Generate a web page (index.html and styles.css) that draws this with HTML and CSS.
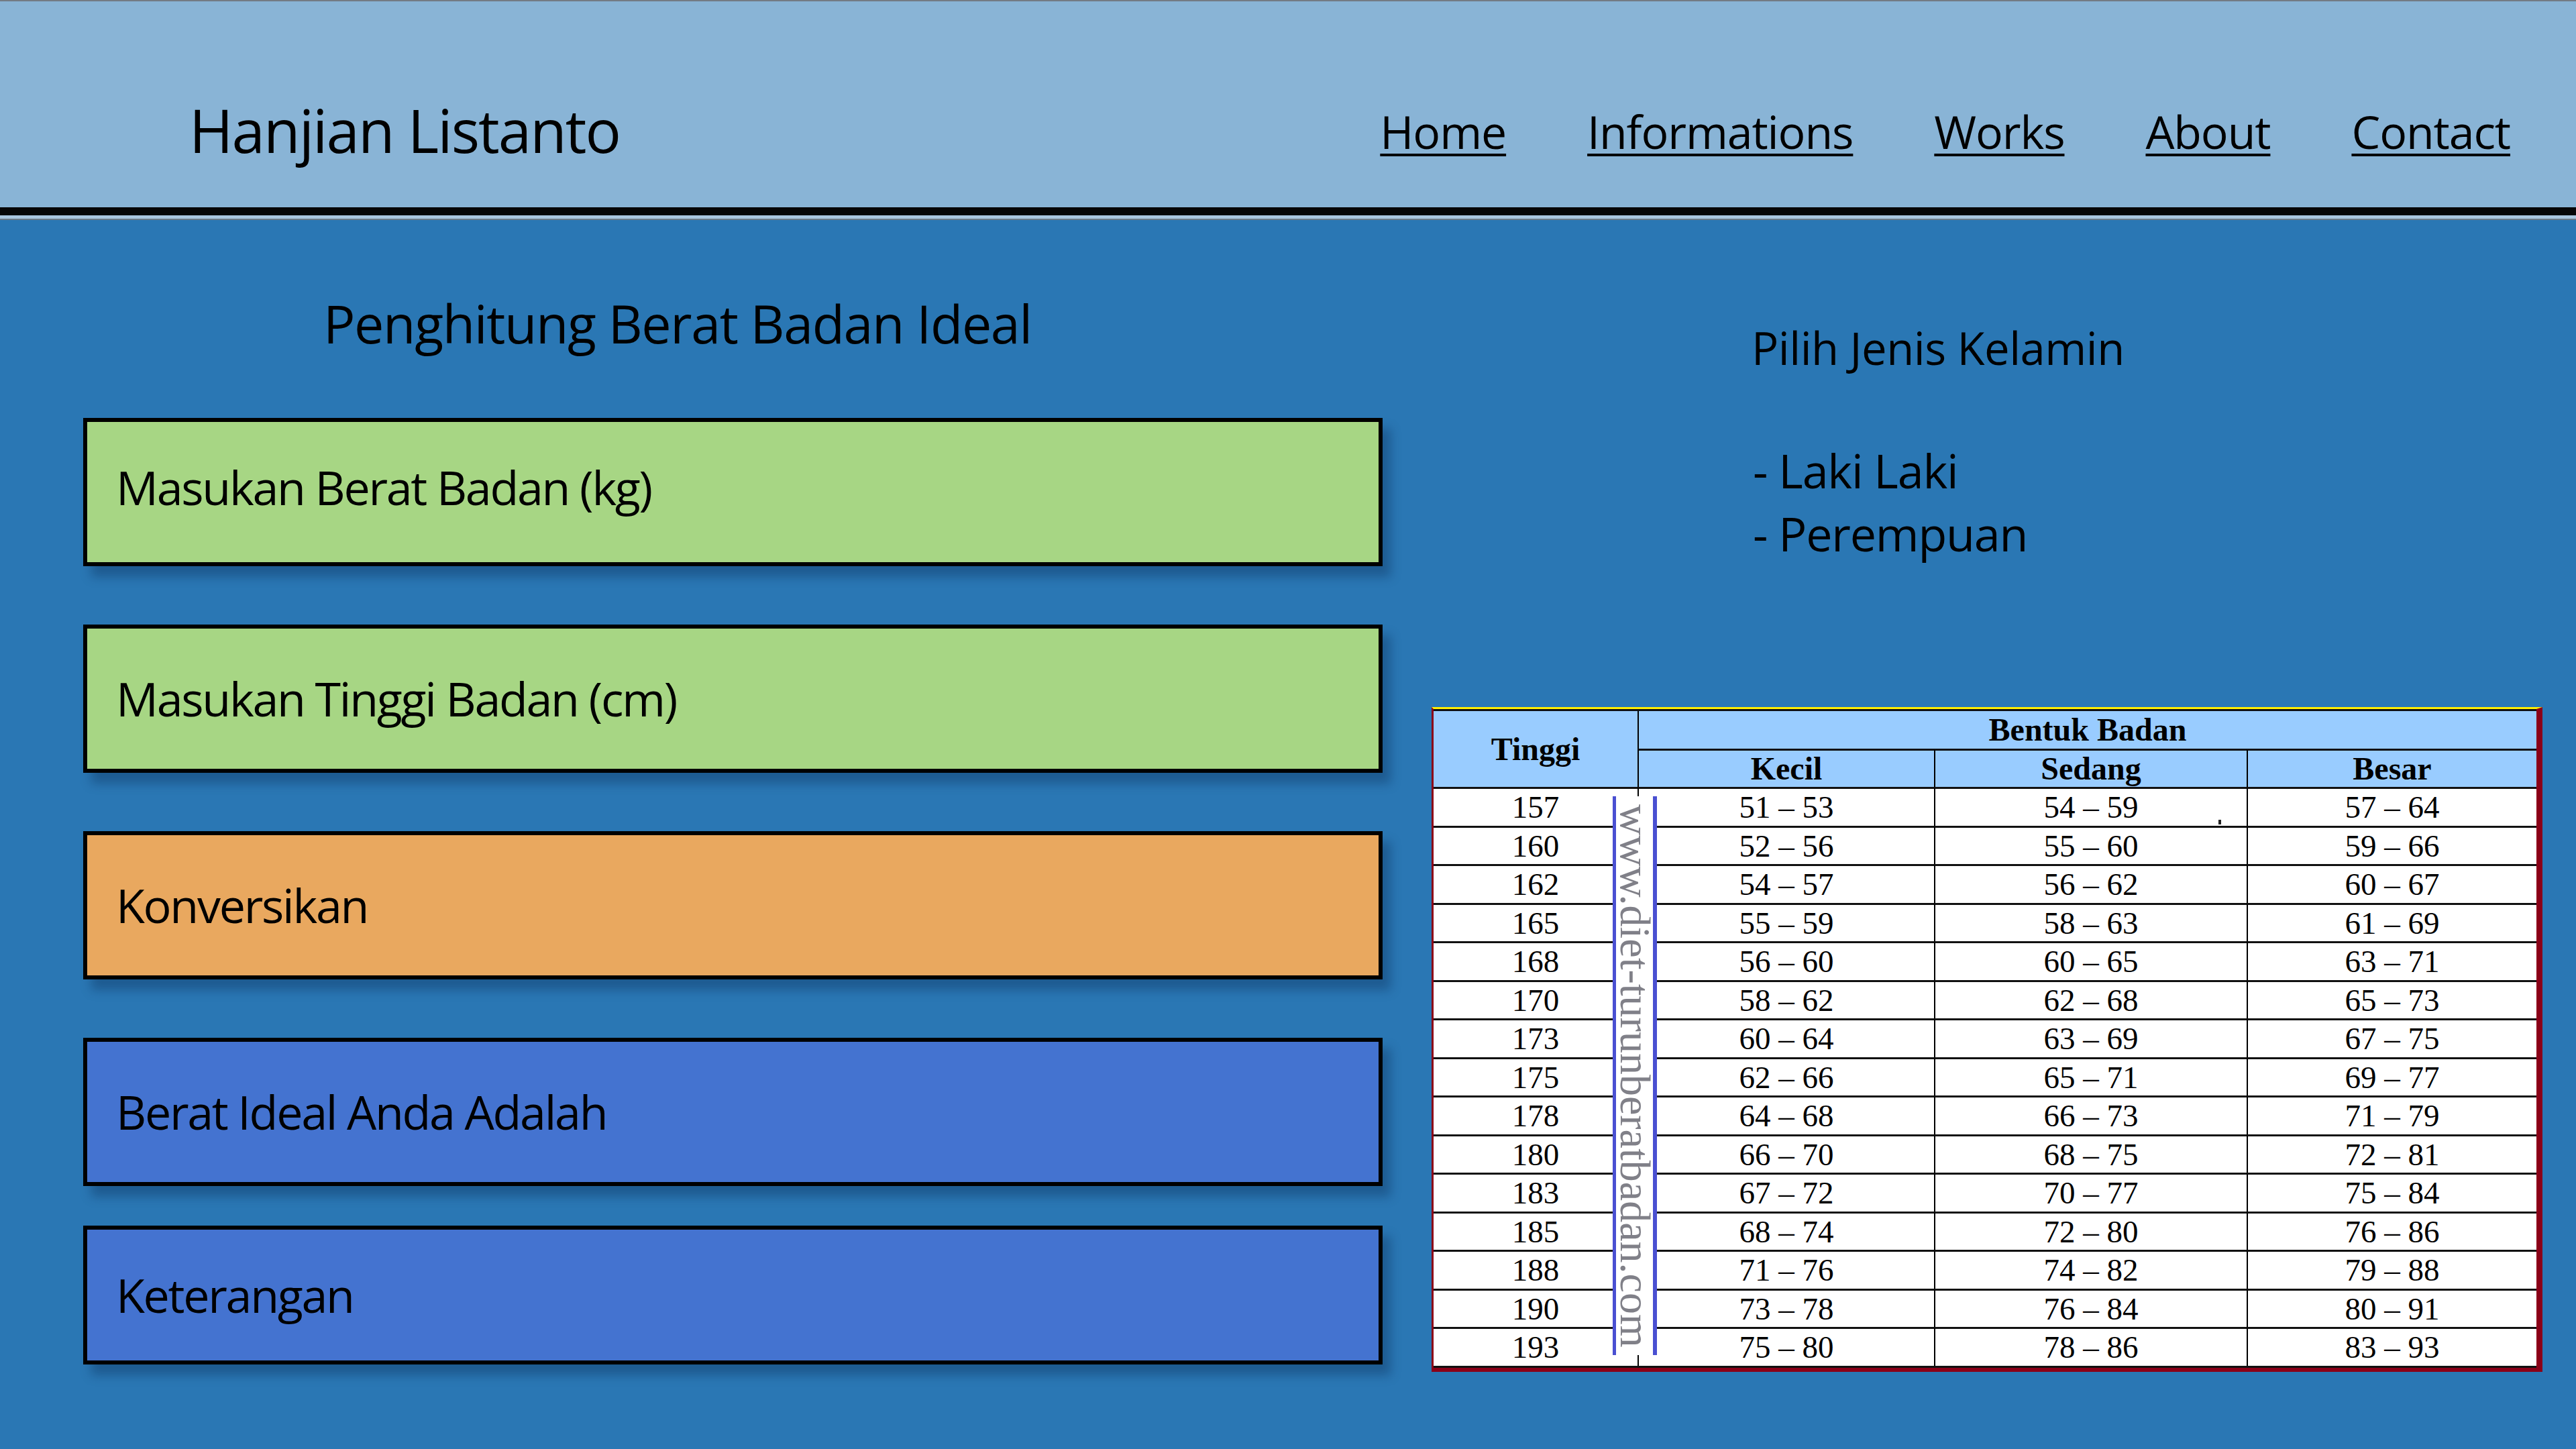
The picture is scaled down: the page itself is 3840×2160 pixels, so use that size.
FILE: index.html
```html
<!DOCTYPE html>
<html lang="id">
<head>
<meta charset="utf-8">
<title>Hanjian Listanto - Penghitung Berat Badan Ideal</title>
<link rel="stylesheet" href="styles.css">
</head>
<body>
<header class="site-header">
  <div class="brand">Hanjian Listanto</div>
  <nav class="nav">
    <a href="#" class="nav-link">Home</a>
    <a href="#" class="nav-link">Informations</a>
    <a href="#" class="nav-link">Works</a>
    <a href="#" class="nav-link">About</a>
    <a href="#" class="nav-link">Contact</a>
  </nav>
</header>
<div class="header-rule"></div>
<main class="main">
  <section class="calc">
    <h1 class="calc-title">Penghitung Berat Badan Ideal</h1>
    <div class="box box-green box-first">Masukan Berat Badan (kg)</div>
    <div class="box box-green">Masukan Tinggi Badan (cm)</div>
    <div class="box box-orange">Konversikan</div>
    <div class="box box-blue">Berat Ideal Anda Adalah</div>
    <div class="box box-blue box-note">Keterangan</div>
  </section>
  <section class="side">
    <h2 class="side-title">Pilih Jenis Kelamin</h2>
    <ul class="gender-list">
      <li>- Laki Laki</li>
      <li>- Perempuan</li>
    </ul>
    <div class="table-wrap">
      <table class="ideal-table">
        <colgroup>
          <col class="c-tinggi">
          <col class="c-kecil">
          <col class="c-sedang">
          <col class="c-besar">
        </colgroup>
        <thead>
          <tr>
            <th rowspan="2" class="col-tinggi">Tinggi</th>
            <th colspan="3" class="th-group">Bentuk Badan</th>
          </tr>
          <tr>
            <th class="th-sub">Kecil</th>
            <th class="th-sub">Sedang</th>
            <th class="th-sub">Besar</th>
          </tr>
        </thead>
        <tbody>
          <tr><td>157</td><td>51 – 53</td><td>54 – 59</td><td>57 – 64</td></tr>
          <tr><td>160</td><td>52 – 56</td><td>55 – 60</td><td>59 – 66</td></tr>
          <tr><td>162</td><td>54 – 57</td><td>56 – 62</td><td>60 – 67</td></tr>
          <tr><td>165</td><td>55 – 59</td><td>58 – 63</td><td>61 – 69</td></tr>
          <tr><td>168</td><td>56 – 60</td><td>60 – 65</td><td>63 – 71</td></tr>
          <tr><td>170</td><td>58 – 62</td><td>62 – 68</td><td>65 – 73</td></tr>
          <tr><td>173</td><td>60 – 64</td><td>63 – 69</td><td>67 – 75</td></tr>
          <tr><td>175</td><td>62 – 66</td><td>65 – 71</td><td>69 – 77</td></tr>
          <tr><td>178</td><td>64 – 68</td><td>66 – 73</td><td>71 – 79</td></tr>
          <tr><td>180</td><td>66 – 70</td><td>68 – 75</td><td>72 – 81</td></tr>
          <tr><td>183</td><td>67 – 72</td><td>70 – 77</td><td>75 – 84</td></tr>
          <tr><td>185</td><td>68 – 74</td><td>72 – 80</td><td>76 – 86</td></tr>
          <tr><td>188</td><td>71 – 76</td><td>74 – 82</td><td>79 – 88</td></tr>
          <tr><td>190</td><td>73 – 78</td><td>76 – 84</td><td>80 – 91</td></tr>
          <tr><td>193</td><td>75 – 80</td><td>78 – 86</td><td>83 – 93</td></tr>
        </tbody>
      </table>
      <div class="watermark"><span class="watermark-text">www.diet-turunberatbadan.com</span></div>
      <span class="speck"></span>
    </div>
  </section>
</main>
</body>
</html>
```

FILE: styles.css
```css
* {
  box-sizing: border-box;
}

html, body {
  margin: 0;
  padding: 0;
}

body {
  width: 3840px;
  height: 2160px;
  overflow: hidden;
  background: #2a77b4;
  font-family: "Open Sans", "Noto Sans", sans-serif;
  color: #000;
}

/* ---------- header ---------- */
.site-header {
  height: 321px;
  border-top: 2px solid #737b84;
  border-bottom: 12px solid #060606;
  background: #89b4d6;
  display: flex;
  align-items: flex-start;
  padding: 139px 98px 0 282px;
}

.brand {
  font-size: 89px;
  line-height: 1.2;
  letter-spacing: -2px;
  flex: 1;
}

.nav {
  display: flex;
  gap: 121px;
  margin-top: 14px;
}

.nav-link {
  font-size: 68px;
  line-height: 1.2;
  letter-spacing: -1.1px;
  color: #000;
  text-decoration: underline;
  text-decoration-thickness: 4px;
  text-underline-offset: 7px;
}

.header-rule {
  height: 7px;
  background: #a9c6de;
  border-bottom: 2px solid #6d7a86;
}

/* ---------- main ---------- */
.main {
  display: flex;
  align-items: flex-start;
}

.calc {
  width: 1937px;
  margin-left: 124px;
  display: flex;
  flex-direction: column;
}

.calc-title {
  margin: 107px 0 93px 358px;
  font-size: 79px;
  font-weight: 400;
  line-height: 1.2;
  letter-spacing: -1.4px;
}

.box {
  height: 221px;
  border: 6px solid #000;
  display: flex;
  align-items: center;
  padding-left: 43px;
  font-size: 70px;
  letter-spacing: -2.3px;
  box-shadow: 12px 16px 14px rgba(10, 40, 80, 0.35);
}

.box + .box {
  margin-top: 87px;
}

.box.box-first {
  padding-bottom: 14px;
}

.box-green {
  background: #a7d684;
}

.box-orange {
  background: #e9a85f;
}

.box-blue {
  background: #4473d0;
}

.box.box-note {
  height: 207px;
  margin-top: 59px;
}

/* ---------- side ---------- */
.side {
  margin-left: 73px;
  width: 1656px;
  display: flex;
  flex-direction: column;
}

.side-title {
  margin: 150px 0 0 477px;
  font-size: 67px;
  font-weight: 400;
  line-height: 1.2;
  letter-spacing: -0.5px;
}

.gender-list {
  list-style: none;
  margin: 96px 0 0 479px;
  padding: 0;
  font-size: 70px;
  line-height: 94px;
  letter-spacing: -1.2px;
}

.table-wrap {
  position: relative;
  margin-top: 212px;
  width: 1656px;
  border-left: 3px solid #8b0018;
  border-right: 9px solid #8b0018;
  border-bottom: 6px solid #8b0018;
  border-top: 3px solid #ffee00;
  background: #fff;
}

.ideal-table {
  width: 100%;
  border-collapse: separate;
  border-spacing: 0;
  table-layout: fixed;
  font-family: "Liberation Serif", "Times New Roman", serif;
  font-size: 47px;
  text-align: center;
  border-top: 3px solid #111;
  border-bottom: 3px solid #111;
}

.c-tinggi {
  width: 304px;
}

.c-kecil {
  width: 442px;
}

.c-sedang {
  width: 466px;
}

.c-besar {
  width: auto;
}

.ideal-table th {
  background: #99ccff;
  font-weight: 700;
  font-size: 48px;
  line-height: 1;
  padding: 0;
}

.col-tinggi {
  height: 113px;
}

.th-group {
  height: 56px;
  border-left: 2px solid #000;
}

.th-sub {
  height: 57px;
  border-top: 3px solid #111;
  border-left: 2px solid #000;
}

.ideal-table td {
  height: 57.5px;
  padding: 0;
  line-height: 1;
  border-top: 3px solid #111;
  border-left: 2px solid #000;
}

.ideal-table td:first-child {
  border-left: none;
}

.watermark {
  position: absolute;
  left: 267px;
  top: 130px;
  width: 66px;
  height: 833px;
  background: #fff;
  border-left: 5px solid #4a50d2;
  border-right: 6px solid #4a50d2;
  display: flex;
  justify-content: center;
  align-items: flex-start;
}

.watermark-text {
  writing-mode: vertical-rl;
  font-family: "Liberation Serif", "Times New Roman", serif;
  font-size: 64px;
  line-height: 1;
  color: #808088;
  margin-top: 12px;
}

.speck {
  position: absolute;
  left: 1170px;
  top: 165px;
  width: 4px;
  height: 7px;
  background: #222;
}
```
